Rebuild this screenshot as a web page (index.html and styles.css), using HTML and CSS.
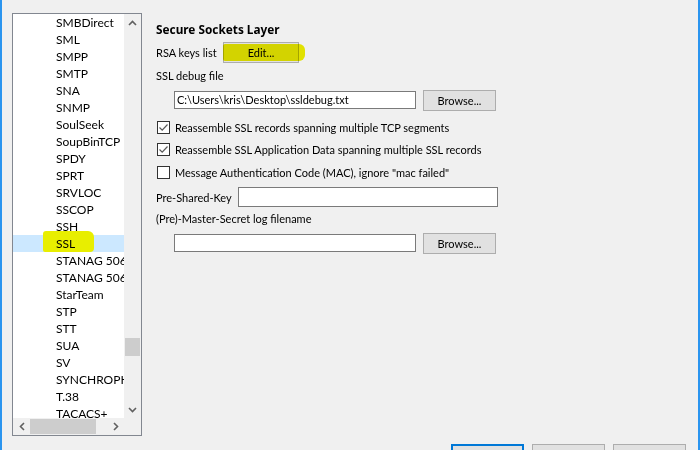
FILE: index.html
```html
<!DOCTYPE html>
<html>
<head>
<meta charset="utf-8">
<link rel="stylesheet" href="styles.css">
</head>
<body>
<div class="window">
  <div class="listbox">
    <div class="list">
      <div class="item">SMBDirect</div>
      <div class="item">SML</div>
      <div class="item">SMPP</div>
      <div class="item">SMTP</div>
      <div class="item">SNA</div>
      <div class="item">SNMP</div>
      <div class="item">SoulSeek</div>
      <div class="item">SoupBinTCP</div>
      <div class="item">SPDY</div>
      <div class="item">SPRT</div>
      <div class="item">SRVLOC</div>
      <div class="item">SSCOP</div>
      <div class="item">SSH</div>
      <div class="item selected"><span class="hl-text">SSL</span></div>
      <div class="item">STANAG 5066</div>
      <div class="item">STANAG 5066</div>
      <div class="item">StarTeam</div>
      <div class="item">STP</div>
      <div class="item">STT</div>
      <div class="item">SUA</div>
      <div class="item">SV</div>
      <div class="item">SYNCHROPHASOR</div>
      <div class="item">T.38</div>
      <div class="item">TACACS+</div>
    </div>
    <div class="vscroll">
      <div class="arrow"><svg width="9" height="6" viewBox="0 0 9 6"><path d="M1 5 L4.5 1.5 L8 5" fill="none" stroke="#606060" stroke-width="1.6"/></svg></div>
      <div class="vtrack"><div class="vthumb"></div></div>
      <div class="arrow"><svg width="9" height="6" viewBox="0 0 9 6"><path d="M1 1 L4.5 4.5 L8 1" fill="none" stroke="#606060" stroke-width="1.6"/></svg></div>
    </div>
    <div class="hscroll">
      <div class="arrow"><svg width="6" height="9" viewBox="0 0 6 9"><path d="M5 1 L1.5 4.5 L5 8" fill="none" stroke="#606060" stroke-width="1.6"/></svg></div>
      <div class="htrack"><div class="hthumb"></div></div>
      <div class="arrow"><svg width="6" height="9" viewBox="0 0 6 9"><path d="M1 1 L4.5 4.5 L1 8" fill="none" stroke="#606060" stroke-width="1.6"/></svg></div>
    </div>
    <div class="corner"></div>
  </div>

  <div class="pane">
    <div class="title">Secure Sockets Layer</div>
    <div class="row r-rsa">
      <span class="lbl">RSA keys list</span>
      <button class="btn btn-edit">Edit...</button>
    </div>
    <div class="label r-debug">SSL debug file</div>
    <div class="row r-file1">
      <div class="input file">C:\Users\kris\Desktop\ssldebug.txt</div>
      <button class="btn">Browse...</button>
    </div>
    <label class="check r-cb1"><span class="box"><svg width="11" height="11" viewBox="0 0 11 11"><path d="M1.5 5.5 L4.2 8.2 L9.5 2.5" fill="none" stroke="#5a5a5a" stroke-width="1.2"/></svg></span>Reassemble SSL records spanning multiple TCP segments</label>
    <label class="check r-cb2"><span class="box"><svg width="11" height="11" viewBox="0 0 11 11"><path d="M1.5 5.5 L4.2 8.2 L9.5 2.5" fill="none" stroke="#5a5a5a" stroke-width="1.2"/></svg></span>Reassemble SSL Application Data spanning multiple SSL records</label>
    <label class="check r-cb3"><span class="box"></span>Message Authentication Code (MAC), ignore "mac failed"</label>
    <div class="row r-psk">
      <span class="lbl">Pre-Shared-Key</span>
      <div class="input psk"></div>
    </div>
    <div class="label r-master">(Pre)-Master-Secret log filename</div>
    <div class="row r-file2">
      <div class="input file"></div>
      <button class="btn">Browse...</button>
    </div>
    <div class="footer">
      <button class="btn fbtn default"></button>
      <button class="btn fbtn"></button>
      <button class="btn fbtn"></button>
    </div>
  </div>
</div>
</body>
</html>
```
FILE: styles.css
```css
html, body {
  margin: 0;
  padding: 0;
  width: 700px;
  height: 450px;
  overflow: hidden;
  background: #f0f0f0;
  font-family: Lato, "Liberation Sans", sans-serif;
  font-size: 12px;
  color: #000;
}

.window {
  display: flex;
  width: 700px;
  height: 450px;
  box-sizing: border-box;
  border-left: 2px solid #2b95ef;
  border-right: 2px solid #2b95ef;
  overflow: hidden;
}

.listbox {
  margin: 13px 0 0 10px;
  width: 130px;
  height: 423px;
  box-sizing: border-box;
  border: 1px solid #828790;
  background: #fff;
  display: grid;
  grid-template-columns: 111px 17px;
  grid-template-rows: 404px 17px;
  flex: none;
}

.list {
  overflow: hidden;
  white-space: nowrap;
}

.item {
  height: 17px;
  line-height: 17px;
  padding-left: 43px;
  font-size: 12px;
}

.selected {
  background: #cce8ff;
  position: relative;
}

.selected::before {
  content: "";
  position: absolute;
  left: 30px;
  top: -4px;
  width: 51px;
  height: 21px;
  border-radius: 3px 6px 4px 2px;
  background: #e8ee00;
}

.hl-text {
  position: relative;
}

.vscroll {
  background: #f0f0f0;
  display: flex;
  flex-direction: column;
}

.arrow {
  width: 17px;
  height: 17px;
  display: flex;
  align-items: center;
  justify-content: center;
  flex: none;
}

.vtrack {
  flex: 1;
}

.vthumb {
  margin: 307px 0 0 1px;
  width: 15px;
  height: 18px;
  background: #cdcdcd;
}

.hscroll {
  background: #f0f0f0;
  display: flex;
}

.htrack {
  flex: 1;
  display: flex;
  align-items: center;
}

.hthumb {
  width: 66px;
  height: 15px;
  background: #cdcdcd;
}

.corner {
  background: #f0f0f0;
}

.pane {
  flex: 1;
  padding-left: 14px;
  display: flex;
  flex-direction: column;
  height: 480px;
  white-space: nowrap;
  font-size: 11px;
}

.title {
  font-family: "Noto Sans", sans-serif;
  font-weight: bold;
  font-size: 11.8px;
  height: 16px;
  line-height: 16px;
  margin-top: 21px;
}

.row {
  display: flex;
  align-items: center;
  height: 20px;
}

.lbl {
  flex: none;
}

.label {
  height: 16px;
  line-height: 16px;
}

.r-rsa { margin-top: 5px; }
.r-rsa .lbl { width: 67px; }
.r-debug { margin-top: 6px; }
.r-file1 { margin-top: 6px; padding-left: 18px; }
.r-cb1 { margin-top: 9px; }
.r-cb2 { margin-top: 6px; }
.r-cb3 { margin-top: 7px; }
.r-psk { margin-top: 7px; }
.r-psk .lbl { width: 82px; }
.r-master { margin-top: 4px; }
.r-file2 { margin-top: 6px; padding-left: 18px; }

.btn {
  font: inherit;
  color: #000;
  width: 73px;
  height: 21px;
  box-sizing: border-box;
  border: 1px solid #adadad;
  background: #e1e1e1;
  padding: 0;
  flex: none;
}

.btn-edit {
  width: 76px;
  position: relative;
}

.btn-edit::after {
  content: "";
  position: absolute;
  left: -1px;
  top: 1px;
  width: 82px;
  height: 17px;
  border-radius: 2px 6px 6px 2px;
  background: #f0f000;
  mix-blend-mode: multiply;
}

.input {
  box-sizing: border-box;
  height: 18px;
  border: 1px solid #7a7a7a;
  background: #fff;
  line-height: 16px;
  padding-left: 2px;
  white-space: nowrap;
  overflow: hidden;
  flex: none;
}

.file {
  width: 242px;
  margin-right: 7px;
}

.psk {
  width: 260px;
  height: 20px;
}

.check {
  display: flex;
  align-items: center;
  height: 16px;
  padding-left: 1px;
}

.box {
  width: 13px;
  height: 13px;
  box-sizing: border-box;
  border: 1px solid #333;
  background: #fff;
  margin-right: 5px;
  display: flex;
  align-items: center;
  justify-content: center;
  flex: none;
}

.footer {
  margin-top: auto;
  display: flex;
  justify-content: flex-end;
  gap: 8px;
  padding-right: 12px;
  padding-bottom: 13px;
}

.fbtn {
  height: 23px;
}

.default {
  border: 2px solid #0078d7;
}
```
